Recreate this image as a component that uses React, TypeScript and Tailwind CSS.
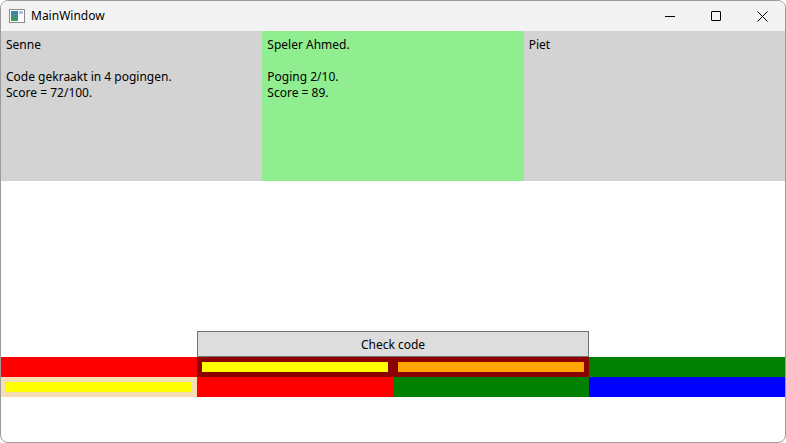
const font = { fontFamily: '"Segoe UI", "Noto Sans", "Open Sans", sans-serif' };

const AppIcon = () => (
  <svg width="16" height="14" viewBox="0 0 16 14">
    <rect x="0.5" y="0.5" width="15" height="13" fill="#ffffff" stroke="#8a8a8a" />
    <defs>
      <linearGradient id="g" x1="0" y1="0" x2="0" y2="1">
        <stop offset="0" stopColor="#3f7fbf" />
        <stop offset="1" stopColor="#3aa050" />
      </linearGradient>
    </defs>
    <rect x="2" y="2" width="7" height="10" fill="url(#g)" />
    <rect x="10" y="2" width="4" height="3" fill="#a9c8e8" />
  </svg>
);

const TitleBar = () => (
  <div className="flex h-[30px] items-center bg-[#f3f3f3]">
    <div className="ml-[8px] mr-[6px] flex items-center">
      <AppIcon />
    </div>
    <span className="text-[12px] text-black">MainWindow</span>
    <div className="ml-auto flex h-full">
      <div className="flex w-[46px] items-center justify-center">
        <div className="h-px w-[10px] bg-black" />
      </div>
      <div className="flex w-[46px] items-center justify-center">
        <div className="h-[10px] w-[10px] rounded-[1px] border border-black" />
      </div>
      <div className="flex w-[46px] items-center justify-center">
        <svg width="11" height="11" viewBox="0 0 11 11">
          <path d="M0.5 0.5 L10.5 10.5 M10.5 0.5 L0.5 10.5" stroke="#000" strokeWidth="1" />
        </svg>
      </div>
    </div>
  </div>
);

interface PlayerProps {
  lines: string[];
  active?: boolean;
}

const PlayerPanel = ({ lines, active }: PlayerProps) => (
  <div className={`px-[5px] pt-[6px] text-[12px] leading-[16px] text-black ${active ? 'bg-[#90ee90]' : 'bg-[#d3d3d3]'}`}>
    {lines.map((line, i) => (
      <div key={i} className="h-[16px] whitespace-pre">
        {line}
      </div>
    ))}
  </div>
);

export default function App() {
  return (
    <div className="h-[443px] w-[786px] bg-white" style={font}>
      <div className="flex h-[443px] w-[786px] flex-col overflow-hidden rounded-[8px] border border-[#9b9b9b] bg-white">
        <TitleBar />
        <div className="grid h-[150px] grid-cols-3">
          <PlayerPanel lines={['Senne', '', 'Code gekraakt in 4 pogingen.', 'Score = 72/100.']} />
          <PlayerPanel active lines={['Speler Ahmed.', '', 'Poging 2/10.', 'Score = 89.']} />
          <PlayerPanel lines={['Piet']} />
        </div>
        <div className="h-[150px]" />
        <div className="grid grid-cols-4">
          <div />
          <div className="col-span-2 flex h-[26px] items-center justify-center border border-[#707070] bg-[#dddddd] pt-[1px] text-[12px] text-black">
            Check code
          </div>
          <div />
        </div>
        <div className="grid h-[20px] grid-cols-4">
          <div className="bg-[#ff0000]" />
          <div className="bg-[#8b0000] p-[5px]">
            <div className="h-full bg-[#ffff00]" />
          </div>
          <div className="bg-[#8b0000] p-[5px]">
            <div className="h-full bg-[#ffa500]" />
          </div>
          <div className="bg-[#008000]" />
        </div>
        <div className="grid h-[20px] grid-cols-4">
          <div className="bg-[#f5deb3] p-[5px]">
            <div className="h-full bg-[#ffff00]" />
          </div>
          <div className="bg-[#ff0000]" />
          <div className="bg-[#008000]" />
          <div className="bg-[#0000ff]" />
        </div>
      </div>
    </div>
  );
}
